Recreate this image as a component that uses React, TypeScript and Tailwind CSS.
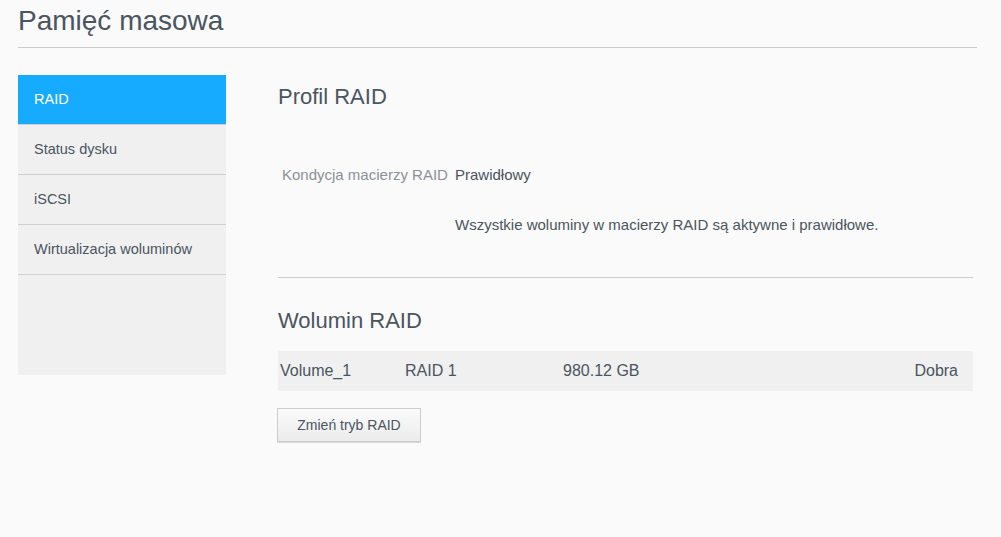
const navItems = ["RAID", "Status dysku", "iSCSI", "Wirtualizacja woluminów"];

const App = () => {
  return (
    <div className="min-h-[537px] bg-[#fafafa] font-['Liberation_Sans',Arial,sans-serif] text-[#4a5560]">
      <div className="px-[18px] pt-[5px]">
        <h1 className="text-[28px] leading-[32px] h-[42px] text-[#4a5560]">Pamięć masowa</h1>
        <div className="mr-[6px] border-t border-[#cccccc]" />
      </div>

      <div className="flex pt-[27px] pl-[18px]">
        <ul className="w-[208px] h-[300px] bg-[#f0f0f0]">
          {navItems.map((item, i) => (
            <li
              key={item}
              className={
                i === 0
                  ? "h-[50px] flex items-center pl-4 text-[14.5px] text-white bg-[#17abff] border-b border-[#cfcfcf]"
                  : "h-[50px] flex items-center pl-4 text-[14.5px] text-[#4a5560] border-b border-[#cfcfcf]"
              }
            >
              {item}
            </li>
          ))}
        </ul>

        <div className="ml-[52px] w-[695px]">
          <h2 className="text-[22px] leading-[26px] mt-[9px]">Profil RAID</h2>

          <div className="mt-[55px] flex text-[15px] leading-[20px]">
            <span className="w-[177px] pl-[4px] text-[#8a9199]">Kondycja macierzy RAID</span>
            <span>Prawidłowy</span>
          </div>
          <div className="mt-[30px] pl-[177px] text-[15px] leading-[20px]">
            Wszystkie woluminy w macierzy RAID są aktywne i prawidłowe.
          </div>

          <div className="mt-[42px] border-t border-[#cccccc]" />

          <h2 className="text-[22px] leading-[26px] mt-[30px]">Wolumin RAID</h2>

          <div className="mt-[17px] h-[40px] bg-[#f0f0f0] flex items-center pl-[2px] pr-[15px] text-[16px]">
            <span className="w-[125px]">Volume_1</span>
            <span className="w-[158px]">RAID 1</span>
            <span>980.12 GB</span>
            <span className="ml-auto">Dobra</span>
          </div>

          <button className="mt-[17px] -ml-[1px] h-[34px] w-[144px] border border-[#cccccc] bg-gradient-to-b from-[#fbfbfb] to-[#ebebeb] text-[14px] text-[#4a5560] shadow-[0_1px_0_#d9d9d9]">
            Zmień tryb RAID
          </button>
        </div>
      </div>
    </div>
  );
};

export default App;
